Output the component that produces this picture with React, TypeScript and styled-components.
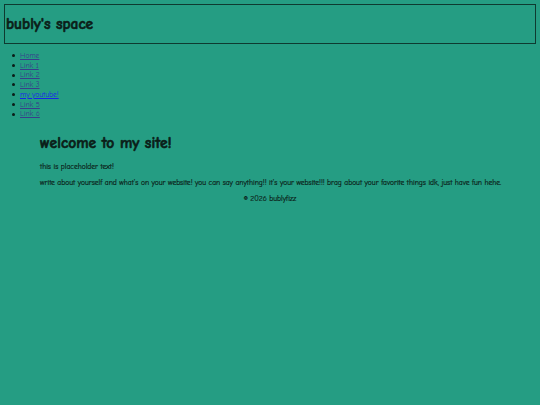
import React from "react";
import styled, { createGlobalStyle } from "styled-components";

const GlobalStyle = createGlobalStyle`
    html, body {
        margin: 0;
        padding: 0;
        background: #259d83;
    }
    body {
        padding: 4px;
        font-family: "Comic Sans MS", "Comic Neue", Lato, "DejaVu Sans", sans-serif;
        color: #0b1d18;
        min-height: 405px;
        box-sizing: border-box;
    }
`;

const Header = styled.header`
    border: 1px solid #0e3a30;
    height: 38px;
    display: flex;
    align-items: center;
`;

const SiteTitle = styled.h1`
    margin: 0 0 0 1px;
    font-size: 15.4px;
    font-weight: bold;
    -webkit-text-stroke: 0.6px currentColor;
`;

const NavList = styled.ul`
    margin: 7px 0 0;
    padding-left: 8px;
    list-style: none;
    font-size: 7.5px;
    line-height: 9.7px;
`;

const NavItem = styled.li`
    display: flex;
    align-items: center;
    gap: 5px;

    &::before {
        content: "";
        width: 3px;
        height: 3px;
        border-radius: 50%;
        background: #0b1d18;
    }
`;

const NavLink = styled.a<{ $fresh?: boolean }>`
    color: ${({ $fresh }) => ($fresh ? "#1a22e8" : "#383d8c")};
    text-decoration: underline;
`;

const Main = styled.main`
    margin: 15px 0 0 36px;
`;

const Heading = styled.h2`
    margin: 0 0 11px;
    font-size: 15.5px;
    line-height: 18px;
    font-weight: bold;
    -webkit-text-stroke: 0.6px currentColor;
`;

const Para = styled.p`
    margin: 0 0 8px;
    font-size: 7.5px;
    line-height: 8px;
    -webkit-text-stroke: 0.2px currentColor;
`;

const Footer = styled.footer`
    text-align: center;
    font-size: 7.5px;
    line-height: 8px;
    -webkit-text-stroke: 0.2px currentColor;
`;

const links = [
    { label: "Home" },
    { label: "Link 1" },
    { label: "Link 2" },
    { label: "Link 3" },
    { label: "my youtube!", fresh: true },
    { label: "Link 5" },
    { label: "Link 6" },
];

export default function App() {
    return (
        <>
            <GlobalStyle />
            <Header>
                <SiteTitle>bubly's space</SiteTitle>
            </Header>
            <nav>
                <NavList>
                    {links.map((l) => (
                        <NavItem key={l.label}>
                            <NavLink href="#" $fresh={l.fresh}>
                                {l.label}
                            </NavLink>
                        </NavItem>
                    ))}
                </NavList>
            </nav>
            <Main>
                <Heading>welcome to my site!</Heading>
                <Para>this is placeholder text!</Para>
                <Para>
                    write about yourself and what's on your website! you can say anything!! it's your website!!! brag
                    about your favorite things idk, just have fun hehe.
                </Para>
            </Main>
            <Footer>© 2026 bublyfizz</Footer>
        </>
    );
}
